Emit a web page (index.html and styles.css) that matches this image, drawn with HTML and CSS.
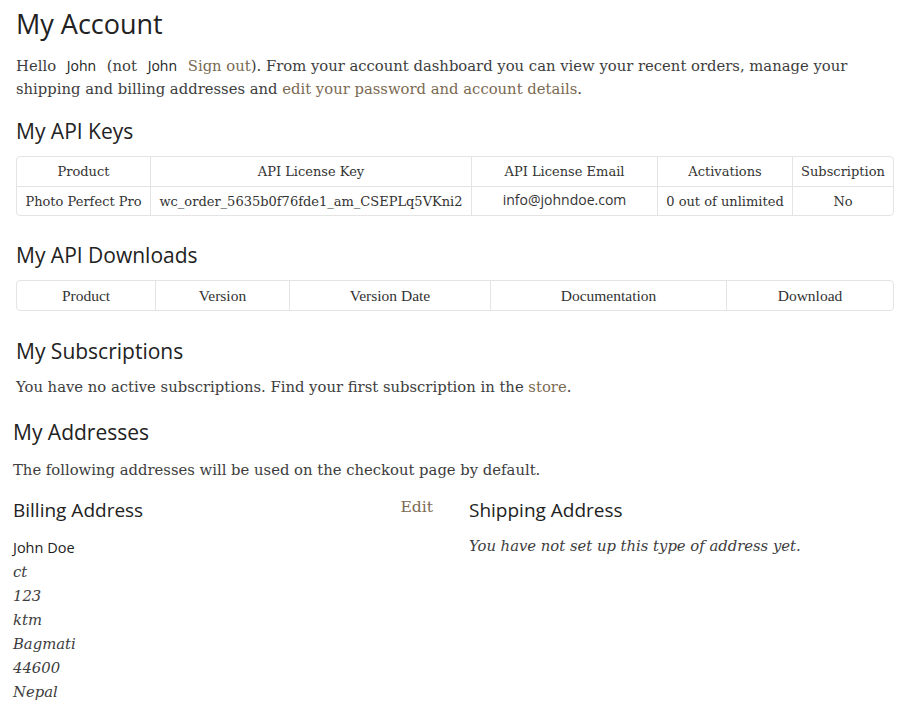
FILE: index.html
```html
<!DOCTYPE html>
<html lang="en">
<head>
  <meta charset="UTF-8" />
  <title>My Account</title>
  <link rel="stylesheet" href="styles.css">
</head>
<body>
  <div class="account">
    <h1>My Account</h1>
    <p class="intro">Hello <span class="name">John</span> (not <span class="name">John</span> <a href="#">Sign out</a>). From your account dashboard you can view your recent orders, manage your shipping and billing addresses and <a href="#">edit your password and account details</a>.</p>

    <h2 class="keys-title">My API Keys</h2>
    <table class="grid keys">
      <colgroup>
        <col class="c-product"><col class="c-key"><col class="c-email"><col class="c-act"><col class="c-sub">
      </colgroup>
      <tr><th>Product</th><th>API License Key</th><th>API License Email</th><th>Activations</th><th>Subscription</th></tr>
      <tr><td>Photo Perfect Pro</td><td>wc_order_5635b0f76fde1_am_CSEPLq5VKni2</td><td class="email">info@johndoe.com</td><td>0 out of unlimited</td><td>No</td></tr>
    </table>

    <h2 class="downloads-title">My API Downloads</h2>
    <table class="grid downloads">
      <colgroup>
        <col class="d-product"><col class="d-version"><col class="d-date"><col class="d-doc"><col class="d-dl">
      </colgroup>
      <tr><th>Product</th><th>Version</th><th>Version Date</th><th>Documentation</th><th>Download</th></tr>
    </table>

    <h2 class="subs-title">My Subscriptions</h2>
    <p class="subs-text">You have no active subscriptions. Find your first subscription in the <a href="#">store</a>.</p>

    <div class="addresses">
      <h2>My Addresses</h2>
      <p class="addr-note">The following addresses will be used on the checkout page by default.</p>
      <div class="addr-cols">
        <div class="addr">
          <div class="addr-head">
            <h3>Billing Address</h3>
            <a href="#" class="edit">Edit</a>
          </div>
          <address>
            <span class="name">John Doe</span><br>
            ct<br>123<br>ktm<br>Bagmati<br>44600<br>Nepal
          </address>
        </div>
        <div class="addr">
          <div class="addr-head">
            <h3>Shipping Address</h3>
          </div>
          <p class="empty">You have not set up this type of address yet.</p>
        </div>
      </div>
    </div>
  </div>
</body>
</html>
```

FILE: styles.css
```css
* {
  box-sizing: border-box;
  margin: 0;
  padding: 0;
}

body {
  font-family: 'DejaVu Serif', serif;
  font-size: 14.8px;
  color: #3d3d3d;
  background: #fff;
}

a {
  color: #7b6a52;
  text-decoration: none;
}

.account {
  padding: 6px 11px 0 16px;
}

h1, h2, h3 {
  font-family: 'Open Sans', sans-serif;
  font-weight: 400;
  color: #222;
}

h1 {
  font-size: 27px;
  line-height: 36px;
  margin-bottom: 12px;
}

h2 {
  font-size: 21px;
  line-height: 28px;
}

.name {
  font-family: 'Open Sans', sans-serif;
  font-size: 14px;
  color: #222;
  margin: 0 6px;
}

.intro {
  line-height: 23px;
}

.keys-title {
  margin-top: 17px;
  margin-bottom: 11px;
}

.grid {
  width: 876px;
  table-layout: fixed;
  border-collapse: separate;
  border-spacing: 0;
  border: 1px solid #e4e4e4;
  border-radius: 4px;
  font-size: 13px;
  color: #333;
}

.grid th, .grid td {
  font-weight: 400;
  text-align: center;
  white-space: nowrap;
  border-left: 1px solid #e4e4e4;
  height: 29px;
}

.grid td {
  border-top: 1px solid #e4e4e4;
}

.grid th:first-child, .grid td:first-child {
  border-left: none;
}

.grid .email {
  font-family: 'Open Sans', sans-serif;
  font-size: 14px;
  vertical-align: top;
  padding-top: 3px;
}

.c-product { width: 133px; }
.c-key { width: 321px; }
.c-email { width: 186px; }
.c-act { width: 135px; }
.c-sub { width: 101px; }

.downloads-title {
  margin-top: 25px;
  margin-bottom: 11px;
}

.downloads {
  font-family: 'Liberation Serif', serif;
  font-size: 15.5px;
}

.d-product { width: 138px; }
.d-version { width: 134px; }
.d-date { width: 201px; }
.d-doc { width: 236px; }
.d-dl { width: 167px; }

.subs-title {
  margin-top: 26px;
  margin-bottom: 10px;
}

.subs-text {
  line-height: 24px;
}

.addresses {
  margin-left: -3px;
  margin-top: 19px;
}

.addr-note {
  margin-top: 12px;
  line-height: 24px;
}

.addr-cols {
  display: grid;
  grid-template-columns: 420px 1fr;
  gap: 36px;
  margin-top: 14px;
}

.addr-head {
  display: flex;
  justify-content: space-between;
  align-items: flex-start;
}

h3 {
  font-size: 19px;
  line-height: 28px;
}

.edit {
  font-size: 15.6px;
  line-height: 22px;
}

address {
  margin-top: 12px;
  line-height: 24px;
}

address .name {
  margin: 0;
  font-style: normal;
  font-size: 14.5px;
}

.empty {
  font-style: italic;
  line-height: 24px;
  margin-top: 10px;
}
```
